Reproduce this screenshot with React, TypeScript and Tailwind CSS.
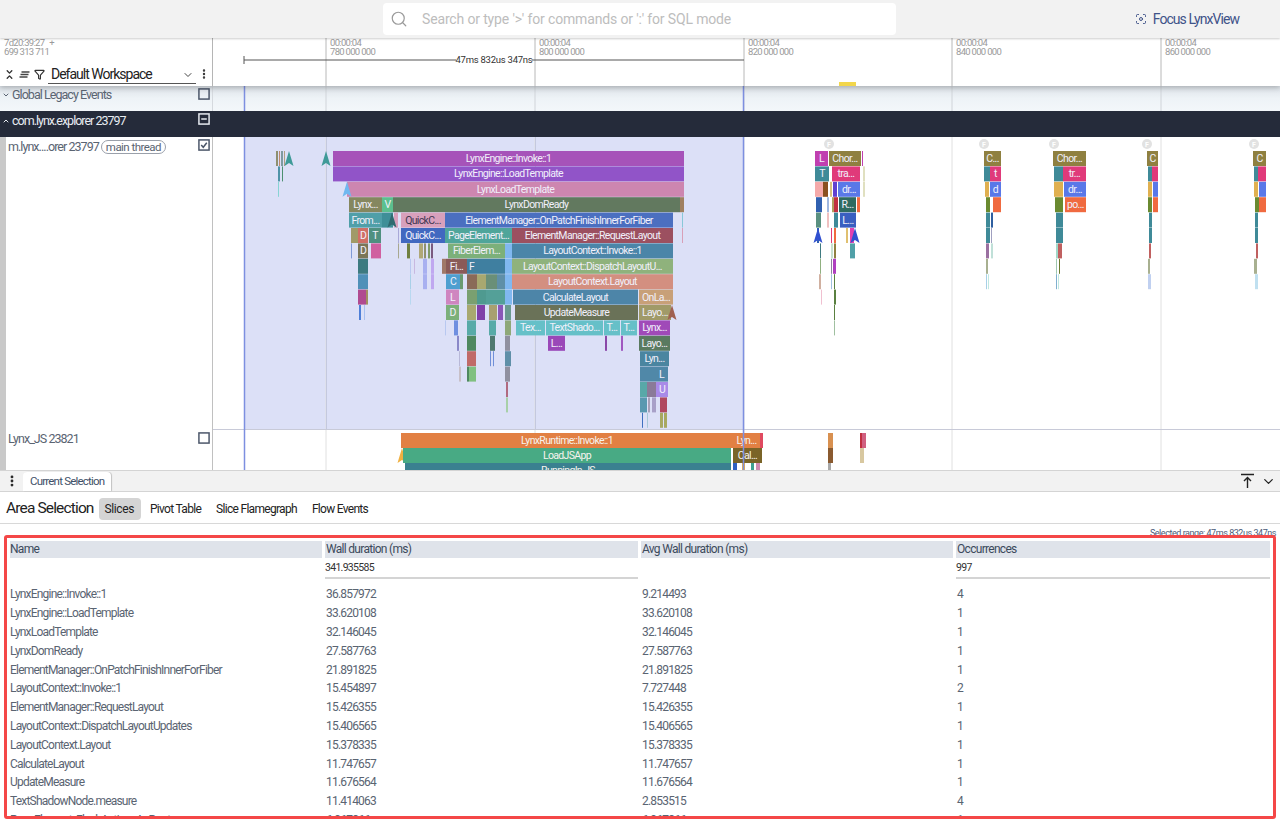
import { ChevronDown, ChevronUp, ChevronsDownUp, EllipsisVertical, Filter, Focus, Search } from 'lucide-react'

// [x0, x1, row, colour, label?, dark label?]
type Slice = [number, number, number, string, string?, boolean?]

const rowY = (row: number) => 151 + row * 15.4

const mainSlices: Slice[] = [
  [276, 278, 0, '#8f9070'], [279, 280, 0, '#c08a70'], [281, 283, 0, '#7f9aa0'], [284, 285, 0, '#b0a080'],
  [278, 280, 1, '#4f93a8'], [282, 283, 1, '#4c9070'], [278, 279, 2, '#88d4d4'],
  [333, 684, 0, '#a653b9', 'LynxEngine::Invoke::1'],
  [333, 684, 1, '#9154c8', 'LynxEngine::LoadTemplate'],
  [347, 684, 2, '#cd86b0', 'LynxLoadTemplate'],
  [349, 382, 3, '#85875f', 'Lynx...'], [382, 393, 3, '#5cc08f', 'V'], [393, 680, 3, '#62795f', 'LynxDomReady'], [680, 684, 3, '#a08060'],
  [349, 382, 4, '#4f9fa8', 'From...'], [382, 393, 4, '#3f8f98'], [394, 398, 4, '#d8a0bc'],
  [401, 445, 4, '#d8a0bc', 'QuickC...', true], [445, 673, 4, '#4b6fc0', 'ElementManager::OnPatchFinishInnerForFiber'],
  [682, 683, 4, '#88c8d8'],
  [351, 358, 5, '#a09a68'], [358, 368, 5, '#cf6f66', 'D'], [369, 381, 5, '#4f9080', 'T'], [398, 399, 5, '#a8a8d8'],
  [401, 445, 5, '#4168c0', 'QuickC...'], [445, 512, 5, '#4fa59a', 'PageElement...'], [512, 673, 5, '#9c5060', 'ElementManager::RequestLayout'],
  [682, 683, 5, '#d8a0b8'],
  [351, 352, 6, '#7f9ad8'], [358, 368, 6, '#7a7558', 'D'], [371, 381, 6, '#d060a0'], [398, 399, 6, '#a8a890'],
  [407, 410, 6, '#6f7f40'], [419, 423, 6, '#b0a878'], [424, 426, 6, '#8f9070'], [428, 430, 6, '#7f9a68'], [431, 433, 6, '#7a5a80'],
  [448, 505, 6, '#7cb07a', 'FiberElem...'], [505, 512, 6, '#80b8f0'], [512, 673, 6, '#4b85a8', 'LayoutContext::Invoke::1'],
  [358, 368, 7, '#3d7a80'], [410, 411, 7, '#b8c8f0'], [414, 415, 7, '#c8b8e0'], [423, 427, 7, '#a8b0f0'], [431, 434, 7, '#c0a8f0'],
  [442, 446, 7, '#a07868'], [446, 467, 7, '#8a5a58', 'Fi...'], [467, 476, 7, '#3f7fa0', 'F'], [476, 505, 7, '#3f7fa0'], [505, 512, 7, '#80b8f0'],
  [512, 673, 7, '#8fb27c', 'LayoutContext::DispatchLayoutU...'],
  [358, 368, 8, '#4f90b8'], [410, 411, 8, '#a8d0e8'], [423, 427, 8, '#a8b0f0'], [431, 434, 8, '#c0a8f0'],
  [446, 460, 8, '#4f9fd0', 'C'], [460, 463, 8, '#6a9a70'], [467, 477, 8, '#8a6a58'], [477, 486, 8, '#a8a870'], [486, 497, 8, '#6a8f78'], [497, 505, 8, '#5f8fa8'], [505, 512, 8, '#80b8f0'],
  [512, 673, 8, '#d38f80', 'LayoutContext.Layout'],
  [358, 366, 9, '#b04a90'], [366, 368, 9, '#a09060'], [410, 411, 9, '#b8d8f0'],
  [446, 459, 9, '#cf85c0', 'L'], [467, 477, 9, '#7aa070'], [477, 486, 9, '#4f9a90'], [486, 505, 9, '#54a098'], [505, 512, 9, '#80b8f0'],
  [513, 638, 9, '#4d85a8', 'CalculateLayout'], [639, 673, 9, '#c8a078', 'OnLa...'],
  [359, 361, 10, '#4f7fd8'], [364, 365, 10, '#a8c0f0'], [446, 459, 10, '#7cb07a', 'D'], [467, 476, 10, '#a8a870'], [477, 485, 10, '#8040a8'],
  [489, 497, 10, '#a8a070'], [498, 503, 10, '#8a58b8'], [505, 511, 10, '#6a9a90'],
  [515, 638, 10, '#6a7258', 'UpdateMeasure'], [639, 671, 10, '#a09a68', 'Layo...'],
  [445, 446, 11, '#b8c8f0'], [454, 458, 11, '#6f8fe0'], [467, 476, 11, '#58aaa8'], [489, 496, 11, '#58aaa8'], [505, 511, 11, '#8fa878'],
  [516, 545, 11, '#66c0c8', 'Tex...'], [546, 603, 11, '#66c0c8', 'TextShado...'], [604, 620, 11, '#66c0c8', 'T...'], [621, 637, 11, '#66c0c8', 'T...'], [639, 670, 11, '#a04ab8', 'Lynx...'],
  [457, 459, 12, '#8a88c8'], [467, 476, 12, '#4f8860'], [490, 495, 12, '#4f7870'], [505, 510, 12, '#9090a0'],
  [548, 565, 12, '#9a48b8', 'L...'], [605, 607, 12, '#8a48a8'], [621, 623, 12, '#a058c0'], [639, 670, 12, '#5a7a60', 'Layo...'],
  [459, 460, 13, '#b8b8d8'], [467, 476, 13, '#c06a68'], [490, 491, 13, '#6f8fd8'], [493, 494, 13, '#6f8fd8'], [505, 511, 13, '#5f8fa8'],
  [640, 669, 13, '#4a85a0', 'Lyn...'],
  [459, 461, 14, '#c8c0c8'], [467, 469, 14, '#4f8860'], [469, 476, 14, '#80c080'], [505, 510, 14, '#9090a0'],
  [640, 655, 14, '#5088a8'], [655, 668, 14, '#5088a8', 'L'],
  [506, 508, 15, '#b06a80'], [640, 647, 15, '#58a8a8'], [647, 656, 15, '#8a7a98'], [656, 668, 15, '#a88ae8', 'U'],
  [506, 508, 16, '#a8d0a8'], [640, 647, 16, '#5a98b0'], [648, 650, 16, '#a8a0b8'], [652, 656, 16, '#a8a0c8'], [660, 667, 16, '#b04860'],
  [642, 643, 17, '#3f6fc0'], [647, 648, 17, '#a8c8d8'], [660, 663, 17, '#a8a860'], [664, 667, 17, '#a8a860'],
  // bursts to the right of the selection
  [815, 828, 0, '#c040b0', 'L'], [829, 861, 0, '#8f8040', 'Chor...'], [862, 863, 0, '#c040b0'],
  [815, 829, 1, '#3f8a98', 'T'], [832, 860, 1, '#e03a7a', 'tra...'], [863, 865, 1, '#e0e0c0'],
  [815, 823, 2, '#f5aaaa'], [823, 828, 2, '#8a5020'], [830, 832, 2, '#d8c080'], [833, 837, 2, '#6040d0'], [838, 860, 2, '#5a78e8', 'dr...'], [863, 865, 2, '#e0e0c0'],
  [816, 822, 3, '#3060b0'], [827, 829, 3, '#a0b8e0'], [832, 834, 3, '#b0a060'], [834, 838, 3, '#c03040'], [839, 856, 3, '#2f6a60', 'R...'], [857, 860, 3, '#f06a40'],
  [816, 821, 4, '#5a9080'], [827, 829, 4, '#f0c0c0'], [834, 838, 4, '#3f8a98'], [840, 856, 4, '#3a5fc0', 'L...'],
  [817, 819, 5, '#3060b0'], [831, 832, 5, '#e03a7a'], [834, 836, 5, '#f06a40'], [846, 848, 5, '#e0c070'], [850, 854, 5, '#e040b0'],
  [820, 821, 6, '#3f7a80'], [831, 833, 6, '#c8e0d0'], [834, 836, 6, '#908040'], [850, 855, 6, '#50a0a8'],
  [820, 821, 7, '#90b080'], [831, 832, 7, '#9080a0'], [833, 836, 7, '#b040c0'],
  [819, 821, 8, '#d0b0a0'], [831, 832, 8, '#a0c0e0'], [834, 835, 8, '#5a8040'],
  [821, 822, 9, '#f0c0d0'], [834, 836, 9, '#5a8040'], [834, 835, 10, '#5a8040'], [834, 835, 11, '#a0c0a0'],
  [984, 1001, 0, '#8f8040', 'C...'], [984, 990, 1, '#3f8a98'], [990, 1001, 1, '#e03a7a', 't'], [985, 989, 2, '#e0b050'], [990, 1001, 2, '#5a78e8', 'd'],
  [986, 990, 3, '#6a8a30'], [993, 1001, 3, '#f06a40'], [986, 990, 4, '#3f8a98'], [991, 993, 4, '#2f5fa0'], [986, 990, 5, '#3f8a98'], [991, 992, 5, '#a0a0c0'],
  [986, 989, 6, '#9a70a0'], [991, 993, 6, '#c0e0d8'], [986, 988, 7, '#a8b090'], [986, 987, 8, '#a8d0e8'], [988, 989, 8, '#c0e8e0'],
  [1053, 1086, 0, '#8f8040', 'Chor...'], [1054, 1063, 1, '#3f8a98'], [1063, 1086, 1, '#e03a7a', 'tr...'], [1054, 1063, 2, '#e0b050'], [1064, 1086, 2, '#5a78e8', 'dr...'],
  [1055, 1063, 3, '#6a8a30'], [1065, 1086, 3, '#f06a40', 'po...'], [1056, 1063, 4, '#3f8a98'], [1056, 1063, 5, '#3f8a98'],
  [1056, 1058, 6, '#a0d8c8'], [1058, 1062, 6, '#c06060'], [1056, 1057, 7, '#a0c8b0'], [1059, 1060, 7, '#6a7a30'], [1056, 1057, 8, '#80b0d0'], [1058, 1059, 8, '#c0e8e0'],
  [1147, 1158, 0, '#8f8040', 'C'], [1148, 1152, 1, '#3f8a98'], [1152, 1158, 1, '#e03a7a'], [1148, 1152, 2, '#e0b050'], [1153, 1158, 2, '#5a78e8'],
  [1148, 1152, 3, '#6a8a30'], [1153, 1158, 3, '#f06a40'], [1149, 1152, 4, '#3f8a98'], [1149, 1152, 5, '#3f8a98'], [1149, 1151, 6, '#c06060'], [1148, 1150, 7, '#a8b090'], [1148, 1151, 8, '#c0d0f0'],
  [1253, 1266, 0, '#8f8040', 'C'], [1254, 1258, 1, '#3f8a98'], [1258, 1266, 1, '#e03a7a'], [1254, 1258, 2, '#e0b050'], [1259, 1266, 2, '#5a78e8'],
  [1255, 1259, 3, '#6a8a30'], [1259, 1266, 3, '#f06a40'], [1255, 1258, 4, '#3f8a98'], [1255, 1258, 5, '#3f8a98'], [1256, 1258, 6, '#c06060'], [1254, 1257, 7, '#a8b090'], [1255, 1258, 8, '#c0e0f0'],
]

// instants: [x, row, colour]
const mainArrows: [number, number, string][] = [
  [289, 0, '#3f9a98'], [326, 0, '#3f9a98'], [347, 2, '#70b8f0'], [392, 4, '#2f6a70'],
  [672, 10, '#a06050'], [818, 5, '#3050d0'], [855, 5, '#3050d0'],
]

const jsSlices: [number, number, number, number, string, string?][] = [
  [401, 733, 433, 15, '#e28043', 'LynxRuntime::Invoke::1'],
  [403, 731, 448, 15, '#48aa84', 'LoadJSApp'],
  [405, 731, 463, 15, '#3a8090', 'RunningIn.JS'],
  [733, 760, 433, 15, '#e28043', 'Lyn...'], [760, 763, 433, 15, '#e04a60'],
  [733, 762, 448, 15, '#7a6428', 'Cal...'],
  [733, 737, 463, 7, '#3060c0'], [742, 745, 463, 7, '#f0b040'], [751, 754, 463, 7, '#40a090'], [756, 760, 463, 7, '#d08ab0'],
  [828, 833, 433, 15, '#d89050'], [828, 833, 448, 15, '#8a5a30'], [828, 831, 463, 7, '#a8a8a8'],
  [860, 862, 433, 15, '#c03040'], [862, 866, 433, 15, '#d06080'], [860, 864, 448, 15, '#d8c8a0'],
]

const rows = [
  ['LynxEngine::Invoke::1', '36.857972', '9.214493', '4'],
  ['LynxEngine::LoadTemplate', '33.620108', '33.620108', '1'],
  ['LynxLoadTemplate', '32.146045', '32.146045', '1'],
  ['LynxDomReady', '27.587763', '27.587763', '1'],
  ['ElementManager::OnPatchFinishInnerForFiber', '21.891825', '21.891825', '1'],
  ['LayoutContext::Invoke::1', '15.454897', '7.727448', '2'],
  ['ElementManager::RequestLayout', '15.426355', '15.426355', '1'],
  ['LayoutContext::DispatchLayoutUpdates', '15.406565', '15.406565', '1'],
  ['LayoutContext.Layout', '15.378335', '15.378335', '1'],
  ['CalculateLayout', '11.747657', '11.747657', '1'],
  ['UpdateMeasure', '11.676564', '11.676564', '1'],
  ['TextShadowNode.measure', '11.414063', '2.853515', '4'],
  ['PageElement::FlushActionsAsRoot', '6.967866', '6.967866', '1'],
]

const ticks = [
  { x: 326, label: '780 000 000' },
  { x: 535, label: '800 000 000' },
  { x: 744, label: '820 000 000' },
  { x: 952, label: '840 000 000' },
  { x: 1161, label: '860 000 000' },
]

function TrackCheck({ state, light }: { state: 'off' | 'on' | 'mixed'; light?: boolean }) {
  const c = light ? '#e8ecf2' : '#4a5568'
  return (
    <svg width="12" height="12" viewBox="0 0 13 13" fill="none" stroke={c} strokeWidth="1.6">
      <rect x="1" y="1" width="11" height="11" />
      {state === 'on' && <path d="M3.5 6.5 5.7 9 9.5 4" />}
      {state === 'mixed' && <path d="M3.5 6.5h6" />}
    </svg>
  )
}

function SliceBox({ s }: { s: Slice }) {
  const [x0, x1, row, color, label, dark] = s
  const y = rowY(row)
  return (
    <g>
      <rect x={x0} y={y} width={x1 - x0} height={15} fill={color} />
      {label && (
        <text x={(x0 + x1) / 2} y={y + 11} textAnchor="middle" fill={dark ? '#3d3550' : '#f1f0fb'} className="text-[10.5px] tracking-[-0.65px]">
          {label}
        </text>
      )}
    </g>
  )
}

function Arrow({ x, y, color }: { x: number; y: number; color: string }) {
  return <polygon points={`${x},${y} ${x - 4.5},${y + 15} ${x},${y + 12} ${x + 4.5},${y + 15}`} fill={color} />
}

function GridLines({ y0, y1, color }: { y0: number; y1: number; color: string }) {
  return (
    <>
      {ticks.map((t) => (
        <line key={t.x} x1={t.x} x2={t.x} y1={y0} y2={y1} stroke={color} />
      ))}
    </>
  )
}

export default function App() {
  return (
    <div className="flex h-[819px] w-[1280px] flex-col overflow-hidden bg-white font-['Roboto',sans-serif] text-[#3c4454]">
      {/* top bar */}
      <div className="relative z-20 flex h-[38px] shrink-0 items-center bg-[#f2f2f2] shadow-[0_1px_2px_rgba(0,0,0,0.2)]">
        <div className="ml-[383px] flex h-8 w-[513px] items-center rounded-sm bg-white pl-[7px]">
          <Search size={18} strokeWidth={1.6} className="text-[#9a9a9a]" />
          <span className="ml-[14px] text-[14px] tracking-[-0.15px] text-[#bdbdbd]">Search or type '&gt;' for commands or ':' for SQL mode</span>
        </div>
        <div className="ml-auto mr-[41px] flex items-center gap-[6px] text-[#3f5389]">
          <Focus size={12} />
          <span className="text-[14px] tracking-[-0.95px]">Focus LynxView</span>
        </div>
      </div>

      {/* timeline header */}
      <div className="relative z-10 flex h-12 shrink-0 bg-white shadow-[0_2px_5px_rgba(0,0,0,0.22)]">
        <div className="flex w-[213px] shrink-0 flex-col border-r border-[#b5b5b5] pl-[4px]">
          <div className="text-[9.5px] leading-[9px] tracking-[-0.7px] text-[#9a9a9a]">
            <div>7d20:39:27 &nbsp;&nbsp;+</div>
            <div>699 313 711</div>
          </div>
          <div className="mt-auto mb-[2px] flex items-center">
            <ChevronsDownUp size={11} strokeWidth={3} className="text-[#333]" />
            <svg width="11" height="7" viewBox="0 0 11 7" className="ml-[4px]" stroke="#444" strokeWidth="1.3" fill="none">
              <path d="M2.5 1h8M1.5 3.5h8M.5 6h8" />
            </svg>
            <Filter size={11} strokeWidth={2.6} className="ml-[4px] text-[#333]" />
            <div className="ml-[3px] flex h-[20px] w-[148px] items-center justify-between border-b border-[#555] pl-[3px] pr-[2px] pt-[2px]">
              <span className="text-[14px] tracking-[-1px] text-[#222]">Default Workspace</span>
              <ChevronDown size={12} className="text-[#444]" />
            </div>
            <EllipsisVertical size={12} strokeWidth={2.8} className="ml-[2px] text-[#333]" />
          </div>
        </div>
        <svg className="flex-1" viewBox="213 38 1067 48">
          <GridLines y0={38} y1={86} color="#b8b8b8" />
          {ticks.map((t) => (
            <g key={t.x} className="text-[9.5px] tracking-[-0.7px]" fill="#9a9a9a">
              <text x={t.x + 4} y={46}>00:00:04</text>
              <text x={t.x + 4} y={55}>{t.label}</text>
            </g>
          ))}
          <path d="M244 56v8M244 60H744" stroke="#555" fill="none" />
          <rect x="456" y="54" width="76" height="12" fill="#fff" />
          <text x="494" y="63" textAnchor="middle" fill="#333" className="text-[9.5px] tracking-[-0.25px]">47ms 832us 347ns</text>
          <rect x="839" y="82" width="17" height="4" fill="#f2d64b" />
        </svg>
      </div>

      {/* pinned group */}
      <div className="flex h-[25px] shrink-0 bg-linear-to-b from-[#dce2e8] via-[#eef3f7] to-[#f3f7fa]">
        <div className="flex w-[213px] shrink-0 items-start justify-between border-r border-[#d5d9de] pl-[2px] pr-[2px]">
          <div className="flex items-center gap-[2px] text-[12.5px] tracking-[-0.95px] text-[#5a6472]">
            <ChevronDown size={8} strokeWidth={3} />
            Global Legacy Events
          </div>
          <div className="pt-[2px]"><TrackCheck state="off" /></div>
        </div>
        <svg className="flex-1" viewBox="213 86 1067 25">
          <GridLines y0={86} y1={111} color="#d0d4d9" />
          <line x1={244.5} x2={244.5} y1={86} y2={111} stroke="#7d8fe0" strokeWidth="1.5" />
          <line x1={743.5} x2={743.5} y1={86} y2={111} stroke="#7d8fe0" strokeWidth="1.5" />
        </svg>
      </div>

      {/* process row */}
      <div className="flex h-[26px] shrink-0 bg-[#252b3a]">
        <div className="flex w-[213px] items-start justify-between pt-[1px] pl-[2px] pr-[3px]">
          <div className="flex items-center gap-[2px] text-[12.5px] tracking-[-1px] text-[#e8ecf2]">
            <ChevronUp size={8} strokeWidth={3} />
            com.lynx.explorer 23797
          </div>
          <div className="pt-[1px]"><TrackCheck state="mixed" light /></div>
        </div>
      </div>

      {/* main thread track */}
      <div className="flex h-[293px] shrink-0">
        <div className="flex w-[213px] shrink-0 items-start justify-between border-l-[6px] border-r border-l-[#c9c9c9] border-r-[#c0c0c0] pt-[1px] pl-[2px] pr-[2px]">
          <div className="flex items-center gap-[2px] text-[12.5px] tracking-[-0.95px] text-[#5a6472]">
            m.lynx....orer 23797
            <span className="rounded-full border border-[#9aa0aa] px-[4px] text-[11.5px] leading-[12px] tracking-[-0.55px]">main thread</span>
          </div>
          <div className="pt-[1px]"><TrackCheck state="on" /></div>
        </div>
        <svg className="flex-1" viewBox="213 137 1067 293">
          <rect x="244" y="137" width="500" height="293" fill="#dce0f7" />
          <GridLines y0={137} y1={430} color="#e0e0e0" />
          <line x1={326.5} x2={326.5} y1={137} y2={430} stroke="#c4c8de" />
          <line x1={535.5} x2={535.5} y1={137} y2={430} stroke="#c4c8de" />
          {mainSlices.map((s, i) => (
            <SliceBox key={i} s={s} />
          ))}
          {mainArrows.map(([x, row, c], i) => (
            <Arrow key={i} x={x} y={rowY(row)} color={c} />
          ))}
          {[829, 984, 1054, 1147, 1254].map((x) => (
            <g key={x}>
              <circle cx={x} cy={144} r={5} fill="#e2e2e2" />
              <text x={x} y={147} textAnchor="middle" fill="#fff" className="text-[7px] font-bold">F</text>
            </g>
          ))}
          <line x1={213} x2={1280} y1={429.5} y2={429.5} stroke="#c8cad8" />
          <line x1={244.5} x2={244.5} y1={137} y2={430} stroke="#7d8fe0" strokeWidth="1.5" />
          <line x1={743.5} x2={743.5} y1={137} y2={430} stroke="#7d8fe0" strokeWidth="1.5" />
        </svg>
      </div>

      {/* js thread track */}
      <div className="flex h-[40px] shrink-0">
        <div className="flex w-[213px] shrink-0 items-start justify-between border-l-[6px] border-r border-l-[#c9c9c9] border-r-[#c0c0c0] pl-[2px] pr-[2px]">
          <span className="text-[12.5px] tracking-[-0.95px] text-[#5a6472]">Lynx_JS 23821</span>
          <div className="pt-[2px]"><TrackCheck state="off" /></div>
        </div>
        <svg className="flex-1" viewBox="213 430 1067 40">
          <GridLines y0={430} y1={470} color="#e0e0e0" />
          <Arrow x={402} y={448} color="#f0b040" />
          {jsSlices.map(([x0, x1, y, h, c, label], i) => (
            <g key={i}>
              <rect x={x0} y={y} width={x1 - x0} height={h} fill={c} />
              {label && (
                <text x={(x0 + x1) / 2} y={y + 11} textAnchor="middle" fill="#f6f3ee" className="text-[10.5px] tracking-[-0.65px]">{label}</text>
              )}
            </g>
          ))}
          <line x1={244.5} x2={244.5} y1={430} y2={470} stroke="#7d8fe0" strokeWidth="1.5" />
          <line x1={743.5} x2={743.5} y1={430} y2={470} stroke="#7d8fe0" strokeWidth="1.5" />
        </svg>
      </div>

      {/* tab bar */}
      <div className="flex h-[22px] shrink-0 items-end border-y border-y-[#d4d4d4] bg-[#f2f2f2]">
        <div className="flex h-full w-[23px] items-center justify-center pb-[1px]">
          <EllipsisVertical size={14} strokeWidth={2.8} className="text-[#222]" />
        </div>
        <div className="flex h-[19px] items-center rounded-t-sm bg-white px-[7px] text-[11.5px] tracking-[-0.8px] text-[#3f5168] shadow-[1px_0_1px_rgba(0,0,0,0.2)]">
          Current Selection
        </div>
        <div className="ml-auto flex h-full items-center gap-[7px] pr-[4px] text-[#222]">
          <svg width="13" height="16" viewBox="0 0 13 16" fill="none" stroke="currentColor" strokeWidth="1.4">
            <path d="M0 1.5h13M6.5 15V5M3 8l3.5-3.5L10 8" />
          </svg>
          <ChevronDown size={15} />
        </div>
      </div>

      {/* details */}
      <div className="flex h-[32px] shrink-0 items-center border-b border-[#d8d8d8] pl-[6px] pt-[2px]">
        <span className="text-[15.5px] tracking-[-0.85px] text-[#222]">Area Selection</span>
        <div className="ml-[5px] flex items-center gap-[3px] text-[12px] tracking-[-0.7px] text-[#222]">
          <span className="rounded-sm bg-[#d4d4d4] py-[2px] pl-[6px] pr-[7px] tracking-[-0.4px]">Slices</span>
          <span className="px-[6px] py-[2px]">Pivot Table</span>
          <span className="px-[6px] py-[2px]">Slice Flamegraph</span>
          <span className="px-[6px] py-[2px]">Flow Events</span>
        </div>
      </div>

      <div className="relative min-h-0 flex-1 overflow-hidden">
        <div className="absolute right-[4px] top-[3px] text-[9px] leading-[12px] tracking-[-0.45px] text-[#4a5a78]">Selected range: 47ms 832us 347ns</div>
        <div className="absolute inset-x-[4px] top-[11px] bottom-0 overflow-hidden rounded-[3px] border-[3px] border-[#f44747] bg-white pl-[3px] pt-[3px] pr-[5px]">
          <div className="grid grid-cols-[312px_313px_312px_314px] gap-x-[3px] text-[12px]">
            {['Name', 'Wall duration (ms)', 'Avg Wall duration (ms)', 'Occurrences'].map((h, i) => (
              <div key={h} className={i === 0 ? 'h-[17px] bg-[#dfe3ea] leading-[17px] tracking-[-0.7px] text-[#3c4a5c]' : 'h-[17px] bg-[#dfe3ea] pl-px leading-[17px] tracking-[-0.7px] text-[#3c4a5c]'}>{h}</div>
            ))}
            <div />
            <div className="flex h-[21px] items-center border-b-2 border-[#d4d4d4] text-[10.5px] tracking-[-0.7px] text-[#333]">341.935585</div>
            <div />
            <div className="flex h-[21px] items-center border-b-2 border-[#d4d4d4] text-[10.5px] tracking-[-0.7px] text-[#333]">997</div>
          </div>
          <div className="pt-[6px]">
            {rows.map((r) => (
              <div key={r[0]} className="grid h-[18.8px] grid-cols-[312px_313px_312px_314px] items-center gap-x-[3px] text-[12px] tracking-[-0.8px] text-[#5a6472]">
                {r.map((cell, i) => (
                  <div key={i} className={i === 0 ? '' : 'pl-px'}>{cell}</div>
                ))}
              </div>
            ))}
          </div>
        </div>
      </div>
    </div>
  )
}
